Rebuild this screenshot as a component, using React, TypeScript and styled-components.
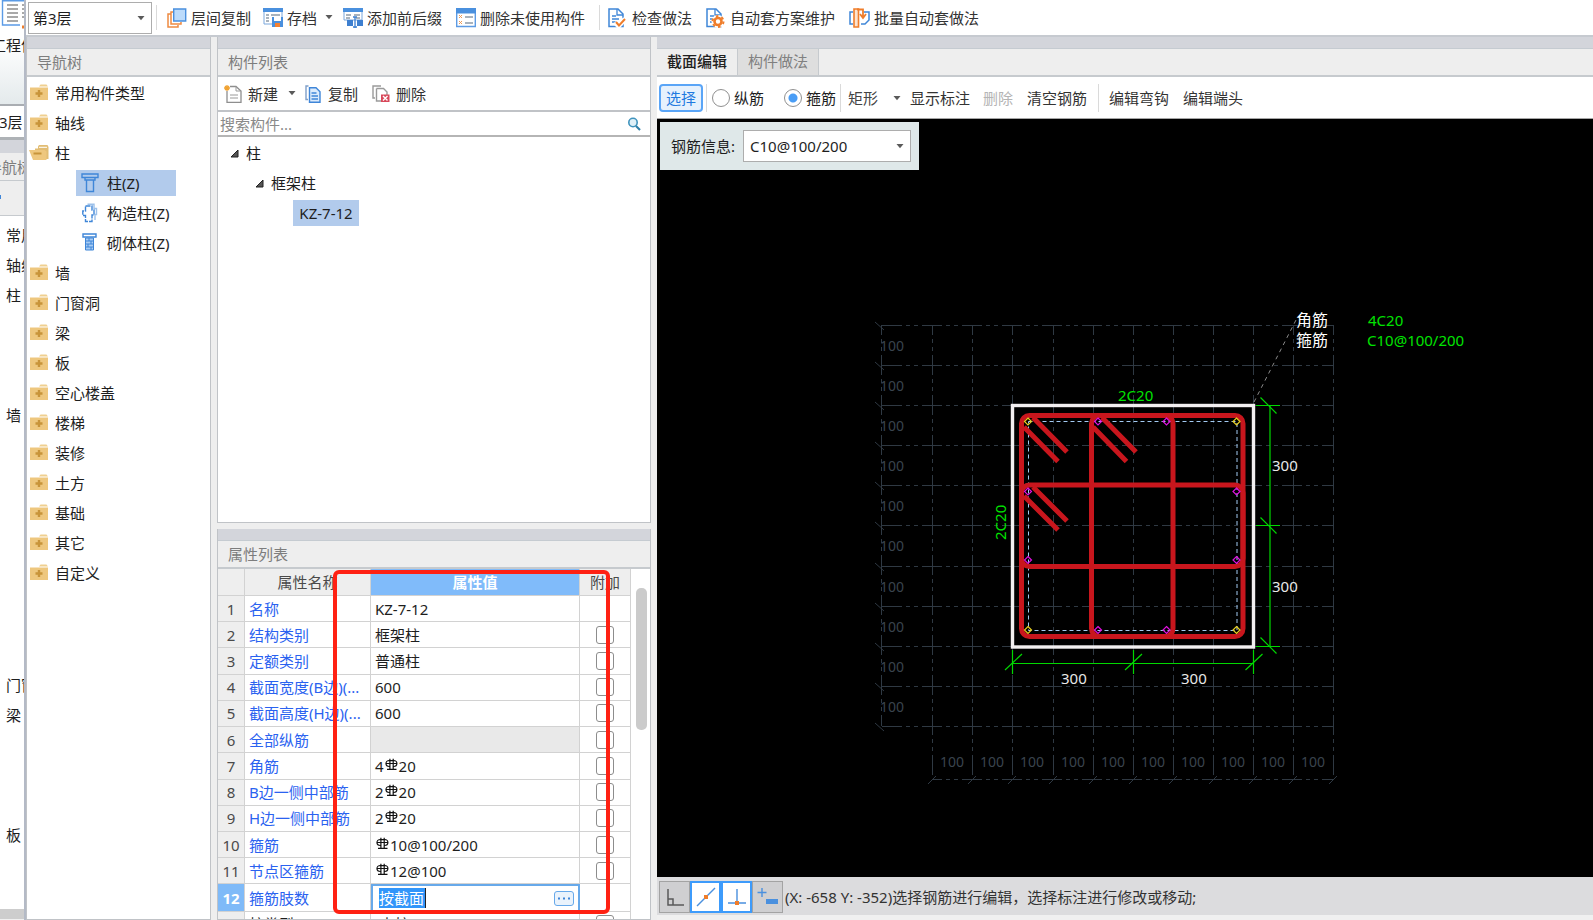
import React from "react";
import styled, { createGlobalStyle } from "styled-components";

const GlobalStyle = createGlobalStyle`
  *, *::before, *::after { box-sizing: border-box; }
  body { margin: 0; background: #eeeeee; }
  button, input, select { font: inherit; color: inherit; margin: 0; padding: 0; }
`;

const FONT = `"Noto Sans", "Noto Sans CJK SC", sans-serif`;

/* ---------- frame ---------- */

const Page = styled.div`
  display: flex;
  height: 100vh;
  min-height: 600px;
  overflow: hidden;
  font: 15px/20px ${FONT};
  color: #1e1e1e;
  white-space: nowrap;
`;

const Dialog = styled.main`
  flex: 1;
  min-width: 0;
  display: flex;
  flex-direction: column;
  background: #eeeeee;
  border-left: 2px solid #b4bac6;
`;

const Workspace = styled.div`
  flex: 1;
  min-height: 0;
  display: grid;
  grid-template-columns: 185px 434px minmax(0, 1fr);
  column-gap: 6px;
`;

const Column = styled.div`
  min-height: 0;
  min-width: 0;
  display: grid;
  grid-template-rows: minmax(0, 486fr) minmax(0, 391fr);
  row-gap: 6px;
`;

const Panel = styled.section`
  min-height: 0;
  min-width: 0;
  display: flex;
  flex-direction: column;
  overflow: hidden;
  background: #ffffff;
  border: solid #c0c3c7;
  border-width: 0 1px 1px 1px;
`;

const Band = styled.div`
  flex: none;
  height: 12px;
  background: #d3d5db;
  border-bottom: 1px solid #c5cbd1;
`;

const PanelTitle = styled.h2`
  flex: none;
  margin: 0;
  height: 28px;
  padding-left: 10px;
  background: #eeeeee;
  border-bottom: 2px solid #c6cace;
  font: inherit;
  line-height: 26px;
  color: #7d7d7d;
`;

/* ---------- window behind the dialog ---------- */

const Behind = styled.aside`
  flex: none;
  width: 24px;
  overflow: hidden;
  display: flex;
  flex-direction: column;
  background: #ffffff;
`;

const BehindRibbon = styled.div`
  flex: none;
  height: 106px;
  background: linear-gradient(#ffffff 40%, #e4eaec);
  border-bottom: 2px solid #a9adb2;
  svg { display: block; }
`;

const ClippedLabel = styled.div<{ $shift: number }>`
  height: 31px;
  line-height: 32px;
  margin-left: ${(p) => -p.$shift}px;
`;

const BehindBand = styled.div`
  flex: none;
  height: 16px;
  background: #d3d5db;
  border-top: 3px solid #aeb2b6;
`;

const BehindTitle = styled.div`
  flex: none;
  height: 28px;
  line-height: 28px;
  background: #eeeeee;
  color: #7d7d7d;
  border-bottom: 1px solid #c6cace;
  span { margin-left: -13px; }
`;

const BehindTools = styled.div`
  flex: none;
  height: 35px;
  background: #eeeeee;
  border-bottom: 1px solid #c6cace;
  padding-top: 14px;
  svg { display: block; }
`;

const BehindList = styled.ul`
  flex: 1;
  min-height: 0;
  overflow: hidden;
  list-style: none;
  margin: 0;
  padding: 4px 0 0 6px;
`;

const BehindItem = styled.li<{ $skip?: number }>`
  height: 30px;
  line-height: 30px;
  margin-top: ${(p) => (p.$skip ?? 0) * 30}px;
`;

const BehindScroll = styled.div`
  flex: none;
  height: 11px;
  background: #cdcdcd;
  border: solid #f0f0f0;
  border-width: 0 0 1px;
`;

/* ---------- controls ---------- */

const TopBar = styled.header`
  flex: none;
  height: 37px;
  display: flex;
  align-items: center;
  padding: 0 0 0 2px;
  background: #ffffff;
  border-bottom: 2px solid #c6cad0;
`;

const Dropdown = styled.span<{ $w: number; $inset?: number }>`
  position: relative;
  display: block;
  width: ${(p) => p.$w}px;
  height: 32px;
  border: 1px solid #adadad;
  background: #ffffff;
  select {
    appearance: none;
    width: 100%;
    height: 30px;
    padding-left: ${(p) => p.$inset ?? 4}px;
    border: 0;
    background: transparent;
  }
  svg { position: absolute; right: 6px; top: 13px; pointer-events: none; }
`;

const Divider = styled.i<{ $h?: number; $left?: number; $right?: number }>`
  flex: none;
  width: 1px;
  height: ${(p) => p.$h ?? 25}px;
  margin: 0 ${(p) => p.$right ?? 10}px 0 ${(p) => p.$left ?? 4}px;
  background: #dadada;
`;

const ToolButton = styled.button<{ $gap?: number; $after?: number; $muted?: boolean }>`
  flex: none;
  display: flex;
  align-items: center;
  gap: ${(p) => p.$gap ?? 4}px;
  height: 26px;
  margin-right: ${(p) => p.$after ?? 14}px;
  border: 0;
  background: transparent;
  color: ${(p) => (p.$muted ? "#b4b4b4" : "#333333")};
  svg { flex: none; }
`;

const MenuCaret = styled.span`
  display: flex;
  padding-left: 4px;
`;

const SelectButton = styled(ToolButton)`
  width: 44px;
  height: 28px;
  justify-content: center;
  border: 2px solid #5aa5f7;
  border-radius: 4px;
  background: #e6f1fd;
  color: #1f7ae0;
`;

/* ---------- navigation ---------- */

const NavList = styled.ul`
  list-style: none;
  margin: 0;
  padding: 1px 0 0;
`;

const NavChildren = styled.ul`
  list-style: none;
  margin: 0;
  padding: 0;
  li { padding: 2px 0 2px 49px; }
`;

const NavButton = styled.button`
  display: flex;
  align-items: center;
  gap: 6px;
  width: 100%;
  height: 30px;
  padding-left: 2px;
  border: 0;
  background: transparent;
`;

const ChildButton = styled.button<{ $active?: boolean }>`
  display: flex;
  align-items: center;
  gap: 8px;
  height: 26px;
  width: 100px;
  padding-left: 5px;
  border: 0;
  background: ${(p) => (p.$active ? "#b2cbec" : "transparent")};
`;

/* ---------- component list ---------- */

const ListTools = styled.div`
  flex: none;
  height: 35px;
  display: flex;
  align-items: center;
  padding-left: 6px;
  border-bottom: 2px solid #c0c3c7;
`;

const SearchRow = styled.label`
  flex: none;
  height: 25px;
  display: flex;
  align-items: center;
  padding: 0 9px 0 2px;
  border-bottom: 2px solid #b5b5b5;
  input {
    flex: 1;
    min-width: 0;
    height: 22px;
    border: 0;
    outline: 0;
    background: transparent;
  }
  input::placeholder { color: #8a8a8a; opacity: 1; }
`;

const Tree = styled.ul`
  list-style: none;
  margin: 0;
  padding: 1px 0 0 12px;
`;

const TreeRow = styled.li<{ $depth: number }>`
  display: flex;
  align-items: center;
  gap: 7px;
  height: 30px;
  padding-left: ${(p) => p.$depth * 25}px;
`;

const TreeLeaf = styled.button`
  height: 26px;
  width: 66px;
  margin-left: 13px;
  border: 0;
  background: #b2cbec;
`;

/* ---------- property table ---------- */

const TableArea = styled.div`
  flex: 1;
  min-height: 0;
  position: relative;
  display: flex;
  overflow: hidden;
`;

const Table = styled.table`
  flex: none;
  width: 413px;
  height: 369px;
  align-self: flex-start;
  table-layout: fixed;
  border-collapse: separate;
  border-spacing: 0;
  th, td {
    height: 26px;
    padding: 0;
    font-weight: 400;
    line-height: 20px;
    border: solid #d2d2d2;
    border-width: 0 1px 1px 0;
    overflow: hidden;
  }
  thead th { height: 27px; background: #eeeeee; color: #4a4a4a; }
`;

const Index = styled.th<{ $active?: boolean }>`
  && {
    background: ${(p) => (p.$active ? "#7fbaf8" : "#eeeeee")};
    color: ${(p) => (p.$active ? "#ffffff" : "#4a4a4a")};
    font-weight: ${(p) => (p.$active ? 700 : 400)};
  }
`;

const ValueHead = styled.th`
  && {
    background: #80bbfa;
    color: #ffffff;
    font-weight: 700;
  }
`;

const NameCell = styled.th<{ $plain?: boolean }>`
  && {
    padding-left: 4px;
    text-align: left;
    color: ${(p) => (p.$plain ? "#1e1e1e" : "#2a62f0")};
  }
`;

const ValueCell = styled.td<{ $state?: string }>`
  && {
    padding-left: 4px;
    background: ${(p) => (p.$state === "off" ? "#e9e9e9" : "#ffffff")};
    ${(p) => p.$state === "edit" && "border: 2px solid #67a9ea; padding-left: 6px; height: 27px;"}
  }
`;

const Editor = styled.div`
  display: flex;
  justify-content: space-between;
  align-items: center;
  padding-right: 4px;
  input {
    width: 47px;
    height: 20px;
    border: 0;
    border-right: 1px solid #222222;
    outline: 0;
    background: #3296fa;
    color: #ffffff;
  }
  button {
    width: 20px;
    height: 15px;
    display: grid;
    place-items: center;
    border: 1px solid #67a9ea;
    border-radius: 3px;
    background: #eaf3fc;
  }
`;

const CheckCell = styled.td`
  text-align: center;
  input {
    appearance: none;
    display: block;
    width: 18px;
    height: 18px;
    margin: 0 auto;
    border: 1px solid #8d8d8d;
    border-radius: 3px;
    background: #ffffff;
  }
`;

const ScrollTrack = styled.div`
  flex: 1;
  padding: 19px 3px 0 5px;
  i {
    display: block;
    height: 142px;
    border-radius: 5px;
    background: #cbcbcb;
  }
`;

const PropertyWrap = styled.div`
  position: relative;
  min-height: 0;
  display: grid;
`;

const Highlight = styled.div`
  position: absolute;
  left: 116px;
  right: 41px;
  top: 41px;
  bottom: 6px;
  border: 4px solid #ff2113;
  border-radius: 6px;
  pointer-events: none;
`;

/* ---------- section editor ---------- */

const EditorPanel = styled.section`
  min-width: 0;
  min-height: 0;
  display: flex;
  flex-direction: column;
`;

const Tabs = styled.div`
  flex: none;
  height: 28px;
  display: flex;
  background: #eeeeee;
  border-bottom: 2px solid #c6cace;
`;

const Tab = styled.button<{ $active?: boolean }>`
  width: 81px;
  padding-bottom: 2px;
  border: 0;
  border-right: 1px solid #c6cace;
  background: ${(p) => (p.$active ? "#eeeeee" : "#dedede")};
  color: ${(p) => (p.$active ? "#222222" : "#808080")};
  font-weight: ${(p) => (p.$active ? 500 : 400)};
`;

const EditTools = styled.div`
  flex: none;
  height: 42px;
  display: flex;
  align-items: center;
  padding-left: 2px;
  background: #ffffff;
  border-bottom: 1px solid #a5a5a5;
`;

const Radio = styled.label<{ $after: number }>`
  flex: none;
  display: flex;
  align-items: center;
  gap: 4px;
  margin-right: ${(p) => p.$after}px;
  input {
    appearance: none;
    width: 18px;
    height: 18px;
    border: 1px solid #909090;
    border-radius: 50%;
    background: #ffffff;
  }
  input:checked { background: radial-gradient(circle, #4a9df5 0 4px, #ffffff 5px); }
`;

const PlainSelect = styled.span`
  flex: none;
  position: relative;
  display: block;
  width: 62px;
  height: 26px;
  select {
    appearance: none;
    width: 100%;
    height: 26px;
    border: 0;
    background: transparent;
    color: #444444;
  }
  svg { position: absolute; right: 9px; top: 11px; pointer-events: none; }
`;

const CanvasArea = styled.div`
  flex: 1;
  min-height: 0;
  position: relative;
  background: #000000;
  overflow: hidden;
`;

const Drawing = styled.svg`
  display: block;
  width: 100%;
  height: 100%;
  font-family: ${FONT};
`;

const RebarInfo = styled.label`
  position: absolute;
  left: 3px;
  top: 3px;
  height: 48px;
  display: flex;
  align-items: center;
  gap: 8px;
  padding: 0 8px 0 11px;
  background: #dfe8e9;
`;

const StatusBar = styled.footer`
  flex: none;
  height: 43px;
  display: flex;
  align-items: center;
  padding: 0 0 4px 2px;
  background: linear-gradient(#dcdcde 38px, #f0f0f0 38px);
  color: #333333;
`;

const Snap = styled.button<{ $on?: boolean }>`
  flex: none;
  width: 31px;
  height: 32px;
  display: grid;
  place-items: center;
  border: ${(p) => (p.$on ? "2px solid #3d9bfb" : "1px solid #a3a3a3")};
  background: ${(p) => (p.$on ? "#ffffff" : "#cfcfd1")};
`;

const StatusText = styled.span`
  padding-left: 2px;
`;

/* ---------- icons ---------- */

const Caret = () => (
  <svg width="8" height="5" viewBox="0 0 8 5"><path d="M.5 0h7L4 4.300z" fill="#5a5a5a" /></svg>
);

const Folder = ({ open }: { open?: boolean }) =>
  open ? (
    <svg width="20" height="18" viewBox="0 0 20 18">
      <path d="M9 2.500l1-1.500h8.500l1 2V15H6V4.500h3z" fill="#e2bd74" />
      <path d="M10 3.300h8" stroke="#fff" />
      <path d="M0 6h15.500l2 1.500V16H4z" fill="#eec77e" />
      <path d="M4.500 9.500h8" stroke="#c8943a" strokeWidth="2" />
    </svg>
  ) : (
    <svg width="20" height="18" viewBox="0 0 20 18">
      <path d="M10 2.500l1.500-2h6l1.500 2z" fill="#f0d090" />
      <path d="M1 3.500h18V16H1z" fill="#eec77e" />
      <path d="M10 6v7M6.500 9.500h7" stroke="#c8943a" strokeWidth="2.400" />
    </svg>
  );

const blue = { fill: "none", stroke: "#3f86d8", strokeWidth: 1.4 };

const ColumnIcon = () => (
  <svg width="18" height="20" viewBox="0 0 18 20">
    <path d="M1 1h16v3.500h-3V7H4V4.500H1zM4 4.500h10M5.500 7v11.500h7V7" {...blue} />
  </svg>
);
const StructIcon = () => (
  <svg width="18" height="20" viewBox="0 0 18 20">
    <path d="M6.500 1.200H13V5.500h2.500v6H14v5.500" {...blue} stroke="#9dc1ea" />
    <path d="M4.500 3h6.500v4h2v5h-2v6.500H4.500V12.500H1.800V8h2.700z" {...blue} strokeDasharray="5 1" />
  </svg>
);
const MasonryIcon = () => (
  <svg width="18" height="20" viewBox="0 0 18 20">
    <path d="M2 1h13v3H2z" {...blue} />
    <path d="M4.500 5h8v12h-8z" fill="#a9ccf3" stroke="#3f86d8" />
    <path d="M4.500 8h8M4.500 11h8M4.500 14h8M8 5v3M10 8v3M7 11v3M10 14v3" stroke="#3f86d8" />
  </svg>
);

const LayerCopyIcon = () => (
  <svg width="20" height="20" viewBox="0 0 20 20">
    <path d="M4 6H1v13h10v-2M7 4H4v12h10v-2" fill="none" stroke="#ee8a42" strokeWidth="1.500" />
    <path d="M6.700 1h12v12h-12z" fill="#bcdbfb" stroke="#4a90de" strokeWidth="1.400" />
  </svg>
);
const ArchiveIcon = () => (
  <svg width="20" height="20" viewBox="0 0 20 20">
    <path d="M1 1h18v15H1z" fill="#fff" stroke="#7aa7dc" />
    <path d="M0 0h20v4H0z" fill="#4a90de" />
    <path d="M3 7h3M3 10h3M3 13h3M8 7h9" stroke="#8d9aa8" strokeWidth="1.500" />
    <path d="M9 9h11v10H9z" fill="#4a90de" />
    <path d="M11 9h7v4h-7z" fill="#fff" /><path d="M12 15h5v4h-5z" fill="#f58231" />
  </svg>
);
const AffixIcon = () => (
  <svg width="20" height="20" viewBox="0 0 20 20">
    <path d="M1 1h18v11H1z" fill="#fff" stroke="#7aa7dc" />
    <path d="M0 0h20v4H0z" fill="#4a90de" />
    <path d="M3 7h5M3 10h4M11 7h6M13 10h4" stroke="#8d9aa8" strokeWidth="1.500" />
    <path d="M4 12h6v6H4zM14 12h6v6h-6z" fill="#3d7fd0" />
    <path d="M10 9h4M12 9v11M10 19h4" stroke="#3d7fd0" strokeWidth="1.300" />
  </svg>
);
const UnusedIcon = () => (
  <svg width="20" height="20" viewBox="0 0 20 20">
    <path d="M.7 1h18.600v17.500H.7z" fill="#fff" stroke="#5d9be4" strokeWidth="1.400" />
    <path d="M0 0h20v5.500H0z" fill="#4a90de" />
    <path d="M3 7l3 3m0-3l-3 3M3 13l3 3m0-3l-3 3" stroke="#f09a52" />
    <path d="M9 9h8M9 15h8" stroke="#8d9aa8" strokeWidth="1.500" />
  </svg>
);
const DocIcon = ({ children }: { children?: React.ReactNode }) => (
  <svg width="19" height="20" viewBox="0 0 19 20">
    <path d="M1 1h9l5 5v12.500H1z" fill="#fff" stroke="#3f86d8" strokeWidth="1.500" />
    <path d="M9 1v6h6M4 8h4M4 11h7M4 14h4" fill="none" stroke="#3f86d8" strokeWidth="1.300" />
    {children}
  </svg>
);
const CheckIcon = () => (
  <DocIcon>
    <path d="M7 14l3.500 4 6.500-7" fill="none" stroke="#fff" strokeWidth="5" />
    <path d="M8 14l3 3.500 6-6.500" fill="none" stroke="#ef7d2b" strokeWidth="2" />
  </DocIcon>
);
const SchemeIcon = () => (
  <DocIcon>
    <circle cx="12" cy="13.500" r="6.500" fill="#fff" />
    <circle cx="12" cy="13.500" r="3.500" fill="none" stroke="#ef7d2b" strokeWidth="2.600" />
    <circle cx="12" cy="13.500" r="5.500" fill="none" stroke="#ef7d2b" strokeWidth="2" strokeDasharray="2.600 3.160" />
  </DocIcon>
);
const BatchIcon = () => (
  <svg width="21" height="20" viewBox="0 0 21 20">
    <path d="M4 4H1v12h3M15 4h5v8l-4 4h-4" fill="none" stroke="#3f86d8" strokeWidth="1.500" />
    <path d="M9.500 1H5v18h4.500z" fill="#fde3cf" stroke="#ef7d2b" strokeWidth="1.600" />
    <path d="M8 1.500h6V9M11 6l3 4 3-4" fill="none" stroke="#ef7d2b" strokeWidth="1.800" />
  </svg>
);
const NewIcon = () => (
  <svg width="18" height="18" viewBox="0 0 18 18">
    <path d="M3 1.500h9l5 4.500v11.300H3z" fill="#fff" stroke="#8e8e8e" strokeWidth="1.300" />
    <path d="M12 1.500V6h5M6 10h8M6 13h8" fill="none" stroke="#9a9a9a" />
    <path d="M0 0h6v6H0z" fill="#fff" />
    <path d="M3 0v6M0 3h6M1 1l4 4M5 1L1 5" stroke="#f0a232" strokeWidth="1.300" />
  </svg>
);
const CopyIcon = () => (
  <svg width="16" height="18" viewBox="0 0 16 18">
    <path d="M3.500 1H1v13.500h2" fill="none" stroke="#7f9fc9" strokeWidth="1.400" />
    <path d="M4.500 2.700h6.500l4 4v10.500H4.500z" fill="#dcebfc" stroke="#3f86d8" strokeWidth="1.400" />
    <path d="M6.500 8h5M6.500 11h6.500M6.500 14h6.500" stroke="#3f86d8" strokeWidth="1.300" />
  </svg>
);
const DeleteIcon = () => (
  <svg width="18" height="18" viewBox="0 0 18 18">
    <path d="M9 1H1v12h2" fill="none" stroke="#9a9a9a" strokeWidth="1.400" />
    <path d="M4.500 3.500h7L15 7v4M4.500 3.500V16H9" fill="none" stroke="#9a9a9a" strokeWidth="1.400" />
    <path d="M9 9.500h8.500V17H9z" fill="#d8485a" />
    <path d="M11 11l4.500 4.500m0-4.500L11 15.500" stroke="#fff" strokeWidth="1.400" />
  </svg>
);
const SearchIcon = () => (
  <svg width="14" height="14" viewBox="0 0 14 14">
    <circle cx="6" cy="5.500" r="4.200" fill="#dff0f8" stroke="#3f93bd" strokeWidth="1.600" />
    <path d="M9 9l4 4" stroke="#2f7fa9" strokeWidth="2.200" />
  </svg>
);
const Twisty = () => (
  <svg width="9" height="9" viewBox="0 0 9 9"><path d="M8 1v7H1z" fill="#555" stroke="#222" /></svg>
);
const RebarSign = () => (
  <svg width="15" height="14" viewBox="0 0 15 14" aria-hidden="true">
    <path d="M5.500 2.500C.8 2.500.8 8.500 5.500 8.500M9.500 2.500c4.500 0 4.500 6 0 6M5.900.8v10.500M9.200 .8v10.500M2 5.500h11M3 11.300h9.500M4.500 2.600h6" fill="none" stroke="#111" strokeWidth="1.200" />
  </svg>
);

/* ---------- data ---------- */

const NAV_AFTER = ["墙", "门窗洞", "梁", "板", "空心楼盖", "楼梯", "装修", "土方", "基础", "其它", "自定义"];

type Prop = { name: string; pre?: string; bar?: boolean; value?: string; state?: string; check?: boolean; plain?: boolean };
const PROPS: Prop[] = [
  { name: "名称", value: "KZ-7-12" },
  { name: "结构类别", value: "框架柱", check: true },
  { name: "定额类别", value: "普通柱", check: true },
  { name: "截面宽度(B边)(...", value: "600", check: true },
  { name: "截面高度(H边)(...", value: "600", check: true },
  { name: "全部纵筋", state: "off", check: true },
  { name: "角筋", pre: "4", bar: true, value: "20", check: true },
  { name: "B边一侧中部筋", pre: "2", bar: true, value: "20", check: true },
  { name: "H边一侧中部筋", pre: "2", bar: true, value: "20", check: true },
  { name: "箍筋", bar: true, value: "10@100/200", check: true },
  { name: "节点区箍筋", bar: true, value: "12@100", check: true },
  { name: "箍筋肢数", state: "edit", value: "按截面" },
  { name: "柱类型", value: "(中柱)", check: true, plain: true },
];

/* ---------- drawing ---------- */

const GX = [932, 972, 1012, 1053, 1093, 1133, 1173, 1213, 1253, 1293, 1333];
const GY = [325, 365, 405, 445, 485, 525, 566, 606, 646, 686, 726];
const DASH = "20 4 4 4 4 4";

const Diamond = ({ x, y, color }: { x: number; y: number; color: string }) => (
  <path d={`M${x} ${y - 3.5}l3.500 3.500-3.500 3.500-3.500-3.500z`} fill="none" stroke={color} strokeWidth="1.200" />
);

const Section = () => (
  <Drawing>
    <g transform="translate(-657 -119)">
      <g stroke="#2f3943" fill="none">
        {GX.map((x) => <path key={x} d={`M${x + 0.5} 325V779`} strokeDasharray={DASH} strokeDashoffset="10" />)}
        {GY.map((y) => <path key={y} d={`M881 ${y + 0.5}H1333`} strokeDasharray={DASH} strokeDashoffset="-1" />)}
        <path d="M881.500 325V726M932 779.500H1333" strokeDasharray={DASH} strokeDashoffset="10" />
        {GX.map((x) => <path key={x} d={`M${x - 4} 784l8-8`} />)}
        {GY.map((y) => <path key={y} d={`M875 ${y - 3}l9 8`} />)}
      </g>
      <g fill="#3a444e" fontSize="14">
        {GY.slice(0, -1).map((y) => <text key={y} x="880" y={y + 26}>100</text>)}
        {GX.slice(0, -1).map((x) => <text key={x} x={x + 8} y="767">100</text>)}
      </g>
      <path d="M1028.500 421.500H1237V630.500H1028.500z" fill="none" stroke="#a3cbf3" strokeDasharray="4 3" />
      <path d="M1254 402L1296 320" stroke="#8a8a8a" strokeDasharray="4 4" />
      <g fill="none" stroke="#c8161d" strokeWidth="5">
        <rect x="1021.500" y="415.500" width="221.500" height="221" rx="8" />
        <rect x="1091.500" y="415.500" width="81.500" height="221" rx="8" />
        <rect x="1021.500" y="485" width="221.500" height="81.500" rx="8" />
        <path d="M1024 427l34 34.500M1033 417.500l34 34.500M1093 427l33.500 34.500M1102 417.500l34 34.500M1024 496l34 34M1033 487l34 34" />
      </g>
      <rect x="1012.500" y="405.500" width="241" height="241.500" fill="none" stroke="#f2eff0" strokeWidth="3.400" />
      {[421.5, 630].map((y) => (
        <g key={y}>
          <Diamond x={1028} y={y} color="#e8d020" />
          <Diamond x={1098} y={y} color="#e010e0" />
          <Diamond x={1166.5} y={y} color="#e010e0" />
          <Diamond x={1236.5} y={y} color="#e8d020" />
        </g>
      ))}
      {[491.5, 560].map((y) => (
        <g key={y}>
          <Diamond x={1028} y={y} color="#e010e0" />
          <Diamond x={1236.5} y={y} color="#e010e0" />
        </g>
      ))}
      <g stroke="#00d800" fill="none" strokeWidth="1.200">
        <path d="M1270 405.500V646.500M1256 405.500h24M1256 525.500h24M1256 646.500h24" />
        <path d="M1260.500 397.500l16 16M1260.500 517.500l16 16M1260.500 637.500l16 16" />
        <path d="M1012.500 663.500H1253.500M1012.500 650v24M1133.500 650v24M1253.500 650v24" />
        <path d="M1005 670l17-16M1125 670l17-16M1245.500 670l17-16" />
      </g>
      <g fontSize="15" fill="#e8e8e8">
        <text x="1272" y="471">300</text>
        <text x="1272" y="592">300</text>
        <text x="1061" y="684">300</text>
        <text x="1181" y="684">300</text>
      </g>
      <g fontSize="16" fill="#ffffff">
        <text x="1296" y="326">角筋</text>
        <text x="1296" y="346">箍筋</text>
      </g>
      <g fontSize="15" fill="#00e400">
        <text x="1118" y="401">2C20</text>
        <text transform="translate(1006 540) rotate(-90)">2C20</text>
        <text x="1368" y="326">4C20</text>
        <text x="1367" y="346">C10@100/200</text>
      </g>
    </g>
  </Drawing>
);

/* ---------- page ---------- */

export default function App() {
  return (
    <Page>
      <GlobalStyle />
      <Behind>
        <BehindRibbon>
          <svg width="24" height="29" viewBox="0 0 24 29">
            <path d="M24 .7H2.500V25H20" fill="none" stroke="#5b9be6" strokeWidth="1.400" />
            <path d="M7 5h11M7 9h11M7 13h11M7 17h11M7 21h11M22 5h2M22 9h2M22 13h2M22 17h2" stroke="#8d8d8d" strokeWidth="1.300" />
            <path d="M22 27h2" stroke="#ef7d2b" strokeWidth="3" />
          </svg>
          <ClippedLabel $shift={9}>工程信息</ClippedLabel>
        </BehindRibbon>
        <ClippedLabel $shift={16}>第3层</ClippedLabel>
        <BehindBand />
        <BehindTitle><span>导航树</span></BehindTitle>
        <BehindTools>
          <svg width="24" height="4" viewBox="0 0 24 4"><path d="M0 0h1v4H0z" fill="#3f86d8" /></svg>
        </BehindTools>
        <BehindList>
          <BehindItem>常用构件类型</BehindItem>
          <BehindItem>轴线</BehindItem>
          <BehindItem>柱</BehindItem>
          <BehindItem $skip={3}>墙</BehindItem>
          <BehindItem $skip={8}>门窗洞</BehindItem>
          <BehindItem>梁</BehindItem>
          <BehindItem $skip={3}>板</BehindItem>
        </BehindList>
        <BehindScroll />
      </Behind>

      <Dialog>
        <TopBar>
          <Dropdown $w={124}>
            <select aria-label="楼层" defaultValue="第3层"><option>第3层</option></select>
            <Caret />
          </Dropdown>
          <Divider />
          <ToolButton $after={12}><LayerCopyIcon />层间复制</ToolButton>
          <ToolButton $after={10}><ArchiveIcon />存档<MenuCaret><Caret /></MenuCaret></ToolButton>
          <ToolButton><AffixIcon />添加前后缀</ToolButton>
          <ToolButton $after={10}><UnusedIcon />删除未使用构件</ToolButton>
          <Divider $right={8} />
          <ToolButton $gap={5}><CheckIcon />检查做法</ToolButton>
          <ToolButton $gap={5}><SchemeIcon />自动套方案维护</ToolButton>
          <ToolButton><BatchIcon />批量自动套做法</ToolButton>
        </TopBar>

        <Workspace>
          <Panel>
            <Band />
            <PanelTitle>导航树</PanelTitle>
            <NavList>
              <li><NavButton><Folder />常用构件类型</NavButton></li>
              <li><NavButton><Folder />轴线</NavButton></li>
              <li>
                <NavButton><Folder open />柱</NavButton>
                <NavChildren>
                  <li><ChildButton $active><ColumnIcon />柱(Z)</ChildButton></li>
                  <li><ChildButton><StructIcon />构造柱(Z)</ChildButton></li>
                  <li><ChildButton><MasonryIcon />砌体柱(Z)</ChildButton></li>
                </NavChildren>
              </li>
              {NAV_AFTER.map((n) => <li key={n}><NavButton><Folder />{n}</NavButton></li>)}
            </NavList>
          </Panel>

          <Column>
            <Panel>
              <Band />
              <PanelTitle>构件列表</PanelTitle>
              <ListTools>
                <ToolButton $after={9} $gap={6}><NewIcon />新建<MenuCaret><Caret /></MenuCaret></ToolButton>
                <ToolButton $gap={7}><CopyIcon />复制</ToolButton>
                <ToolButton $gap={6}><DeleteIcon />删除</ToolButton>
              </ListTools>
              <SearchRow>
                <input type="text" aria-label="搜索构件" placeholder="搜索构件..." />
                <SearchIcon />
              </SearchRow>
              <Tree>
                <TreeRow $depth={0}><Twisty />柱</TreeRow>
                <TreeRow $depth={1}><Twisty />框架柱</TreeRow>
                <TreeRow $depth={2}><TreeLeaf>KZ-7-12</TreeLeaf></TreeRow>
              </Tree>
            </Panel>

            <PropertyWrap>
              <Panel>
                <Band />
                <PanelTitle>属性列表</PanelTitle>
                <TableArea>
                  <Table>
                    <colgroup>
                      <col style={{ width: 27 }} />
                      <col style={{ width: 126 }} />
                      <col />
                      <col style={{ width: 51 }} />
                    </colgroup>
                    <thead>
                      <tr>
                        <th aria-label="序号" />
                        <th>属性名称</th>
                        <ValueHead>属性值</ValueHead>
                        <th>附加</th>
                      </tr>
                    </thead>
                    <tbody>
                      {PROPS.map((p, i) => (
                        <tr key={p.name}>
                          <Index $active={p.state === "edit"}>{i + 1}</Index>
                          <NameCell $plain={p.plain}>{p.name}</NameCell>
                          <ValueCell $state={p.state}>
                            {p.state === "edit" ? (
                              <Editor>
                                <input type="text" aria-label={p.name} defaultValue={p.value} />
                                <button aria-label="更多">
                                  <svg width="12" height="3" viewBox="0 0 12 3">
                                    <path d="M0 .5h2v2H0zM5 .5h2v2H5zM10 .5h2v2h-2z" fill="#3f86d8" />
                                  </svg>
                                </button>
                              </Editor>
                            ) : (
                              <>{p.pre}{p.bar && <RebarSign />}{p.value}</>
                            )}
                          </ValueCell>
                          <CheckCell>{p.check && <input type="checkbox" aria-label={`附加 ${p.name}`} />}</CheckCell>
                        </tr>
                      ))}
                    </tbody>
                  </Table>
                  <ScrollTrack><i /></ScrollTrack>
                </TableArea>
              </Panel>
              <Highlight />
            </PropertyWrap>
          </Column>

          <EditorPanel>
            <Band />
            <Tabs>
              <Tab $active>截面编辑</Tab>
              <Tab>构件做法</Tab>
            </Tabs>
            <EditTools>
              <SelectButton $after={3}>选择</SelectButton>
              <Divider $h={28} $left={0} $right={5} />
              <Radio $after={20}><input type="radio" name="bar" />纵筋</Radio>
              <Radio $after={4}><input type="radio" name="bar" defaultChecked />箍筋</Radio>
              <Divider $h={28} $left={0} $right={7} />
              <PlainSelect>
                <select aria-label="形状" defaultValue="矩形"><option>矩形</option></select>
                <Caret />
              </PlainSelect>
              <ToolButton $after={13}>显示标注</ToolButton>
              <ToolButton $muted disabled>删除</ToolButton>
              <ToolButton $after={7}>清空钢筋</ToolButton>
              <Divider $h={28} />
              <ToolButton>编辑弯钩</ToolButton>
              <ToolButton>编辑端头</ToolButton>
            </EditTools>
            <CanvasArea>
              <Section />
              <RebarInfo>
                钢筋信息:
                <Dropdown $w={168} $inset={6}>
                  <select defaultValue="C10@100/200"><option>C10@100/200</option></select>
                  <Caret />
                </Dropdown>
              </RebarInfo>
            </CanvasArea>
            <StatusBar>
              <Snap aria-label="正交">
                <svg width="20" height="20" viewBox="0 0 20 20">
                  <path d="M3 2v16h16M3 12h5v6" fill="none" stroke="#5a5a5a" strokeWidth="1.500" />
                </svg>
              </Snap>
              <Snap $on aria-label="中点">
                <svg width="20" height="20" viewBox="0 0 20 20">
                  <path d="M1 19L19 1" stroke="#4a90de" strokeWidth="1.400" />
                  <path d="M8 8h4v4H8z" fill="#ef7d2b" />
                </svg>
              </Snap>
              <Snap $on aria-label="垂足">
                <svg width="20" height="20" viewBox="0 0 20 20">
                  <path d="M10 2v14M1 16h18" stroke="#4a90de" strokeWidth="1.400" />
                  <path d="M8 14h4v4H8z" fill="#ef7d2b" />
                </svg>
              </Snap>
              <Snap aria-label="动态输入">
                <svg width="22" height="20" viewBox="0 0 22 20">
                  <path d="M5 1v9M.5 5.500h9" stroke="#4a90de" strokeWidth="1.400" />
                  <path d="M9 12h12v5H9z" fill="#4a90de" />
                </svg>
              </Snap>
              <StatusText>(X: -658 Y: -352)选择钢筋进行编辑，选择标注进行修改或移动;</StatusText>
            </StatusBar>
          </EditorPanel>
        </Workspace>
      </Dialog>
    </Page>
  );
}
